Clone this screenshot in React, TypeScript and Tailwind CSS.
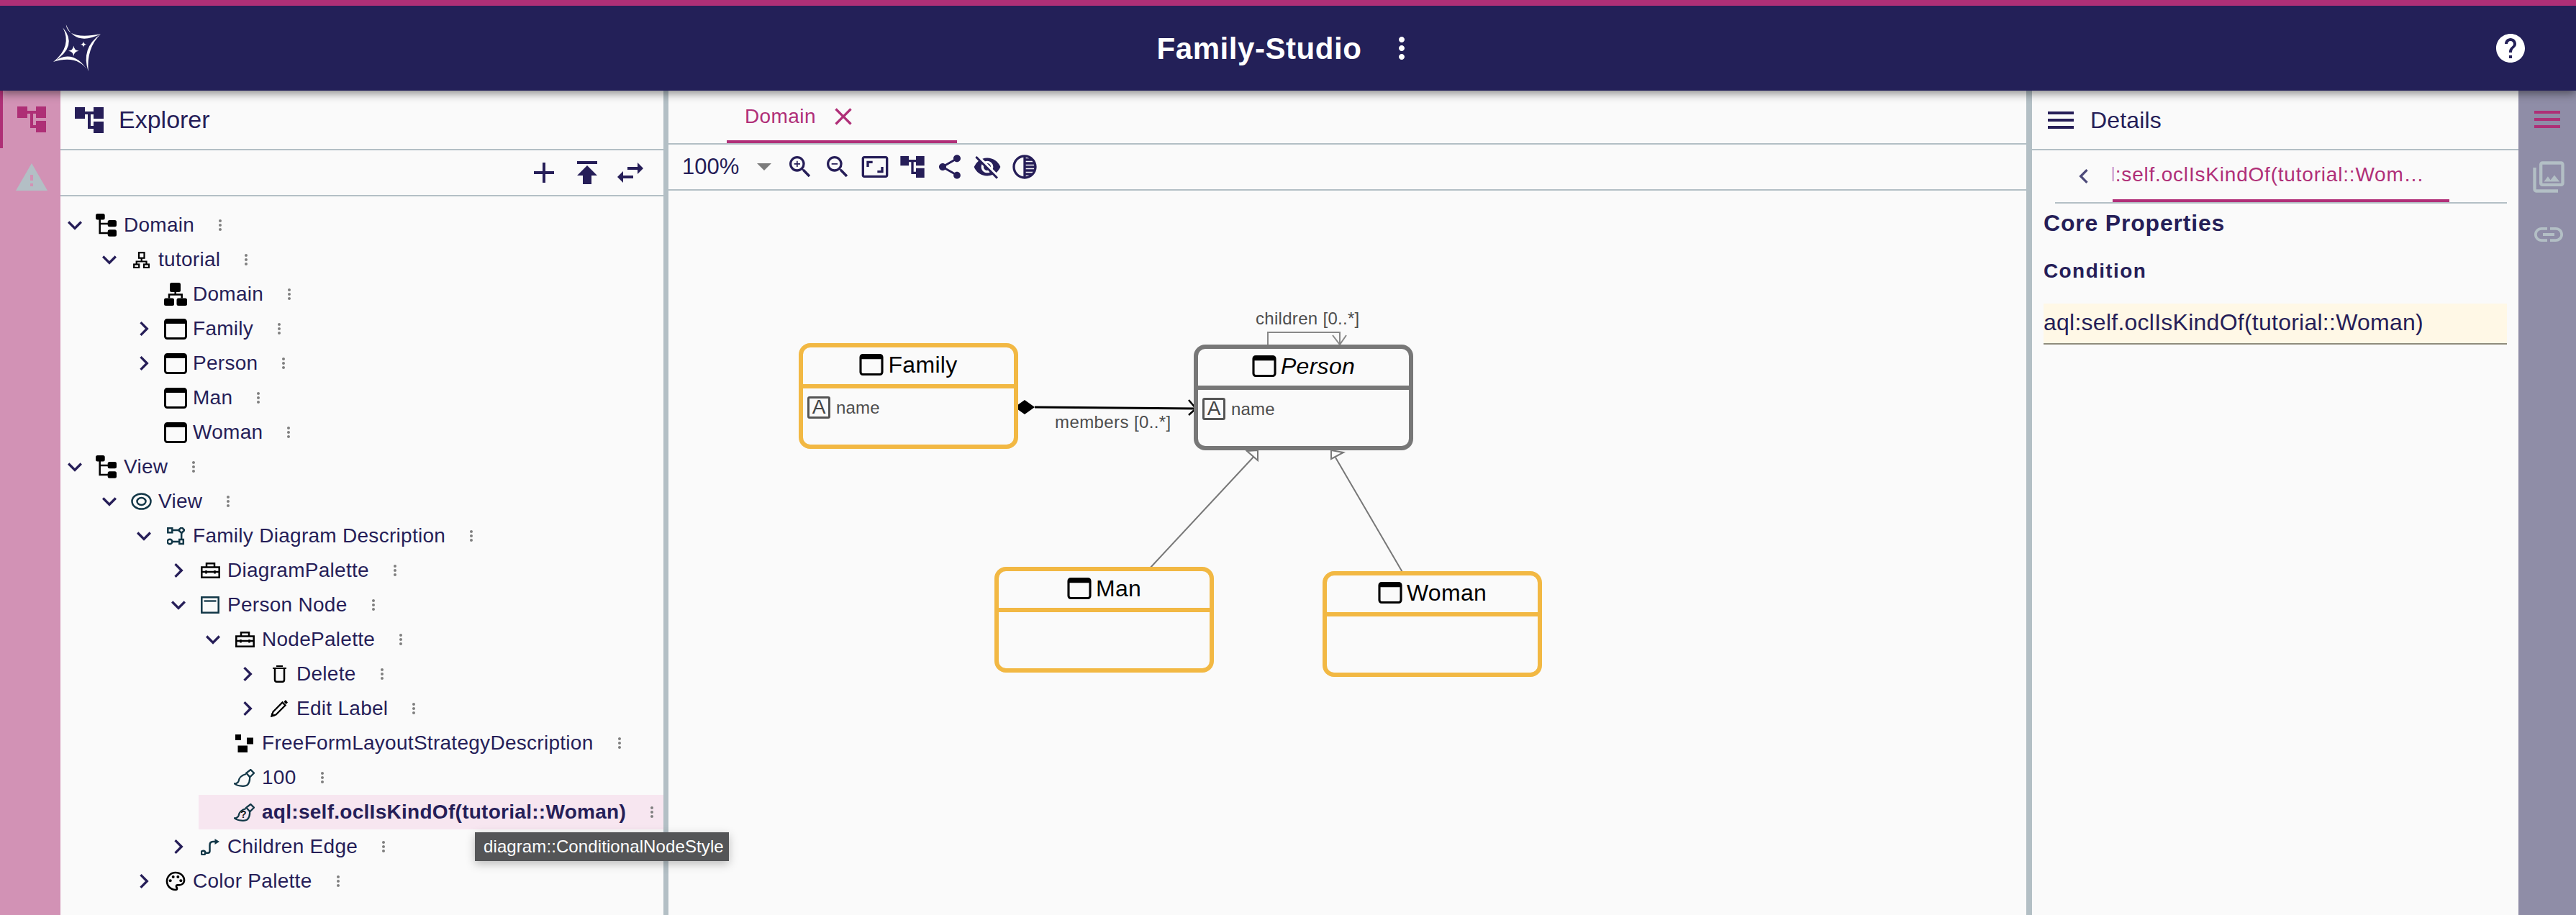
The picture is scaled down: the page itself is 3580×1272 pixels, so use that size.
import React from "react";
import {
  MdAccountTree, MdAdd, MdPublish, MdSwapHoriz, MdWarning, MdHelp, MdMoreVert, MdClose, MdZoomIn, MdZoomOut,
  MdAspectRatio, MdShare, MdVisibilityOff, MdTonality, MdMenu, MdOutlinePhotoLibrary, MdLink, MdKeyboardArrowDown,
  MdChevronRight, MdChevronLeft, MdOutlinePalette,
} from "react-icons/md";

const TEAL = "#123747";

function Logo() {
  return (
    <svg viewBox="0 0 68 68" className="w-[68px] h-[68px] ml-[73px]" fill="white">
      <path d="M18.700 1Q21.200 23 67 14.300Q31.200 31.800 18.700 1Z" />
      <path d="M67 14.300Q39 33.700 49.700 66.300Q47 33.700 67 14.300Z" />
      <path d="M49.700 66.300Q28.700 33 1 53Q35.300 42.400 49.700 66.300Z" />
      <path d="M14.300 5.300Q36.400 31.600 1 53Q27.800 31.600 14.300 5.300Z" />
      <path d="M29.300 30.400Q30 37 36.600 37.700Q30 38.400 29.300 45Q28.600 38.400 22 37.700Q28.600 37 29.300 30.400Z" />
      <path d="M43 24.400Q43.400 28.300 47.300 28.700Q43.400 29.100 43 33Q42.600 29.100 38.700 28.700Q42.600 28.300 43 24.400Z" />
    </svg>
  );
}

const TreeIcon = () => (
  <svg viewBox="0 0 29 32" className="w-[29px] h-[32px] mr-[10px]">
    <rect x="0" y="0" width="12.700" height="8.500" rx="2.500" />
    <rect x="16.700" y="9" width="12.300" height="9.300" rx="2.500" />
    <rect x="16.700" y="22.300" width="12.300" height="9.500" rx="2.500" />
    <path d="M5.700 8V27H17M5.700 14H17" stroke="black" strokeWidth="2.500" fill="none" />
  </svg>
);
const PackageSmall = () => (
  <svg viewBox="0 0 23 23" className="w-[23px] h-[23px] mr-[12px]" fill="none" stroke="black" strokeWidth="2.200">
    <rect x="8" y="1.200" width="7.500" height="7.500" />
    <rect x="1.200" y="17.500" width="7" height="4.500" />
    <rect x="15" y="17.500" width="7" height="4.500" />
    <path d="M11.700 9V14M4.700 17.500V13.500H18.500V17.500" />
  </svg>
);
const PackageFilled = () => (
  <svg viewBox="0 0 32 32" className="w-[32px] h-[32px] mr-[8px]">
    <rect x="8" y="0" width="15" height="13" rx="2.500" />
    <rect x="0" y="21.500" width="14" height="10.500" rx="2.500" />
    <rect x="17.500" y="21.500" width="14.500" height="10.500" rx="2.500" />
    <path d="M15.700 13V17M7 21.500V16.500H24.700V21.500" stroke="black" strokeWidth="2.500" fill="none" />
  </svg>
);
const WindowIcon = ({ className }: { className: string }) => (
  <svg viewBox="0 0 32 29" className={className}>
    <rect x="1.500" y="1.500" width="29" height="26" rx="3" fill="none" stroke="black" strokeWidth="3" />
    <rect x="1" y="1" width="30" height="6" rx="2" />
  </svg>
);
const ClassIcon = () => <WindowIcon className="w-[32px] h-[29px] mr-[8px]" />;
const EyeIcon = () => (
  <svg viewBox="0 0 29 24" className="w-[29px] h-[24px] mr-[9px]" fill="none" stroke={TEAL} strokeWidth="2.500">
    <ellipse cx="14.500" cy="12" rx="13" ry="10.500" />
    <ellipse cx="14.500" cy="12" rx="6" ry="5" />
  </svg>
);
const DiagramIcon = () => (
  <svg viewBox="0 0 25 25" className="w-[25px] h-[25px] mr-[11px]" fill="none" stroke={TEAL} strokeWidth="2.500">
    <rect x="1.300" y="1.300" width="6" height="6" />
    <path d="M20.300 0L24.500 4L20.300 8L16 4Z" />
    <circle cx="4" cy="20" r="3.300" />
    <rect x="17.300" y="17" width="5.500" height="6" />
    <path d="M7.500 4H16M20.200 8V17M7.500 20H17" />
  </svg>
);
const ToolboxIcon = ({ className }: { className: string }) => (
  <svg viewBox="0 0 27 22" className={className} fill="none" stroke="black" strokeWidth="2.500">
    <rect x="1.300" y="6.500" width="24.400" height="14.200" />
    <path d="M8 6.500V1.300H19V6.500" />
    <path d="M1 13H26" strokeWidth="2.500" />
    <path d="M7.500 11V15.500M19.500 11V15.500" strokeWidth="2.500" />
  </svg>
);
const NodeIcon = () => (
  <svg viewBox="0 0 26 24" className="w-[26px] h-[24px] mr-[11px]" fill="none" stroke={TEAL} strokeWidth="2.500">
    <rect x="1.300" y="1.300" width="23.400" height="21.400" />
    <path d="M4.500 6.500H21.500" strokeWidth="2.300" />
  </svg>
);
const TrashIcon = () => (
  <svg viewBox="0 0 19 24" className="w-[19px] h-[24px] mr-[14px]" fill="none" stroke="black" strokeWidth="2.500">
    <path d="M3 5V20C3 21.500 4 22.700 5.500 22.700H13.500C15 22.700 16 21.500 16 20V5" />
    <path d="M0 4H19" strokeWidth="2" />
    <path d="M5 1H14" strokeWidth="2" />
  </svg>
);
const PencilIcon = () => (
  <svg viewBox="0 0 24 24" className="w-[24px] h-[24px] mr-[12px]" fill="none" stroke="black" strokeWidth="2.300">
    <path d="M2 22L3.500 16.500L16.500 3.500L20.500 7.500L7.500 20.500Z" />
    <path d="M18.500 2.500L21 0L24 3.500L21.500 6Z" fill="black" stroke="none" />
    <path d="M0 24L1.500 18L6 22.500Z" fill="black" stroke="none" />
  </svg>
);
const LayoutIcon = () => (
  <svg viewBox="0 0 25 25" className="w-[25px] h-[25px] mr-[12px]">
    <rect x="0" y="0" width="8" height="8" />
    <rect x="16" y="4.500" width="9" height="9" />
    <rect x="3.500" y="15.500" width="13.500" height="9.500" />
  </svg>
);
const BrushIcon = ({ q }: { q?: boolean }) => (
  <svg viewBox="0 0 29 25" className="w-[29px] h-[25px] mr-[10px]" fill="none" stroke={TEAL} strokeWidth="2.300">
    <path d="M17 7C10 9 7 13 6.500 17C6 19 3 20.500 1 20.500C5 24 16 25 19 22C21.500 19 22.500 15 22 11" />
    <path d="M17.300 5.700L23.300 1L28 5.700L22.300 11.300Z" />
    {q && (
      <text x="9" y="20" fontSize="14" fontWeight="700" fill="#111111" stroke="none" fontFamily="Liberation Sans">
        ?
      </text>
    )}
  </svg>
);
const EdgeIcon = () => (
  <svg viewBox="0 0 26 24" className="w-[26px] h-[24px] mr-[11px]" fill="none" stroke={TEAL} strokeWidth="2.500">
    <circle cx="3.500" cy="20.500" r="2.800" />
    <path d="M6.700 20.700H10Q12.500 20.700 12.500 18V10Q12.500 5 17 5H20" />
    <path d="M19.500 1L26 5L19.500 9Z" fill={TEAL} stroke="none" />
  </svg>
);
const PaletteIcon = () => <MdOutlinePalette className="text-black text-[32px] mr-[8px]" />;
const ToolboxRow = () => <ToolboxIcon className="w-[27px] h-[22px] mr-[10px]" />;

type Item = { label: string; level: number; chevron?: "down" | "right"; icon: React.ReactNode; selected?: boolean };
const items: Item[] = [
  { label: "Domain", level: 0, chevron: "down", icon: <TreeIcon /> },
  { label: "tutorial", level: 1, chevron: "down", icon: <PackageSmall /> },
  { label: "Domain", level: 2, icon: <PackageFilled /> },
  { label: "Family", level: 2, chevron: "right", icon: <ClassIcon /> },
  { label: "Person", level: 2, chevron: "right", icon: <ClassIcon /> },
  { label: "Man", level: 2, icon: <ClassIcon /> },
  { label: "Woman", level: 2, icon: <ClassIcon /> },
  { label: "View", level: 0, chevron: "down", icon: <TreeIcon /> },
  { label: "View", level: 1, chevron: "down", icon: <EyeIcon /> },
  { label: "Family Diagram Description", level: 2, chevron: "down", icon: <DiagramIcon /> },
  { label: "DiagramPalette", level: 3, chevron: "right", icon: <ToolboxRow /> },
  { label: "Person Node", level: 3, chevron: "down", icon: <NodeIcon /> },
  { label: "NodePalette", level: 4, chevron: "down", icon: <ToolboxRow /> },
  { label: "Delete", level: 5, chevron: "right", icon: <TrashIcon /> },
  { label: "Edit Label", level: 5, chevron: "right", icon: <PencilIcon /> },
  { label: "FreeFormLayoutStrategyDescription", level: 4, icon: <LayoutIcon /> },
  { label: "100", level: 4, icon: <BrushIcon /> },
  { label: "aql:self.oclIsKindOf(tutorial::Woman)", level: 4, icon: <BrushIcon q />, selected: true },
  { label: "Children Edge", level: 3, chevron: "right", icon: <EdgeIcon /> },
  { label: "Color Palette", level: 2, chevron: "right", icon: <PaletteIcon /> },
];

function Row({ item }: { item: Item }) {
  return (
    <div className="flex h-[48px]" style={{ paddingLeft: item.level * 48 }}>
      <div className={`flex flex-1 items-center ${item.selected ? "bg-[#f7e6f0]" : ""}`}>
        <div className="w-[40px] h-[40px] flex items-center justify-center text-[#261e58] text-[40px]">
          {item.chevron === "down" && <MdKeyboardArrowDown />}
          {item.chevron === "right" && <MdChevronRight />}
        </div>
        <div className="w-[48px] flex items-center justify-end">{item.icon}</div>
        <span className={`text-[28px] leading-[48px] tracking-[0.280px] text-[#261e58] whitespace-nowrap ${item.selected ? "font-bold" : ""}`}>
          {item.label}
        </span>
        <MdMoreVert className="text-[24px] text-[#7f7f7f] ml-[24px]" />
      </div>
    </div>
  );
}

function Explorer() {
  return (
    <div className="w-[838px] flex flex-col">
      <div className="h-[81px] flex items-center pl-[16px]">
        <MdAccountTree className="text-[48px] text-[#261e58]" />
        <span className="text-[34px] text-[#261e58] ml-[17px]">Explorer</span>
      </div>
      <div className="h-[2px] bg-[#b3bfc5]" />
      <div className="h-[62px] flex items-center justify-end gap-[12px] pr-[22px] text-[48px] text-[#261e58]">
        <MdAdd />
        <MdPublish />
        <MdSwapHoriz />
      </div>
      <div className="h-[2px] bg-[#b3bfc5]" />
      <div className="pt-[16px]">
        {items.map((item, i) => (
          <Row key={i} item={item} />
        ))}
      </div>
    </div>
  );
}

type NodeProps = { left: number; top: number; name: string; gray?: boolean; italic?: boolean; attr?: boolean };
function DiagramNode({ left, top, name, gray, italic, attr }: NodeProps) {
  const edge = gray ? "border-[#777777]" : "border-[#f2b843]";
  return (
    <div className={`absolute w-[305px] h-[147px] border-[6px] rounded-[16px] flex flex-col ${edge}`} style={{ left, top }}>
      <div className={`h-[51px] flex items-center justify-center pb-[3px] text-[32px] tracking-[0.300px] text-black ${italic ? "italic" : ""}`}>
        <WindowIcon className="w-[34px] h-[30px] mr-[6px]" />
        <span>{name}</span>
      </div>
      <div className={`border-t-[6px] flex-1 ${edge}`}>
        {attr && (
          <div className="flex items-center pl-[6px] pt-[7px]">
            <span className="w-[32px] h-[31px] border-[3px] border-[#555555] rounded-[3px] flex items-center justify-center text-[28px] leading-none text-[#444444]">
              A
            </span>
            <span className="text-[24px] tracking-[0.200px] text-[#4d4d4d] ml-[8px] pt-[2px]">name</span>
          </div>
        )}
      </div>
    </div>
  );
}

function Diagram() {
  return (
    <div className="relative flex-1">
      <svg className="absolute left-0 top-0 w-[1887px] h-[1007px]" viewBox="929 265 1887 1007" fill="none">
        <path d="M1762 479V462H1862V479" stroke="#888888" strokeWidth="2" />
        <path d="M1852 466L1862 479L1871 466" stroke="#888888" strokeWidth="2" />
        <path d="M1438 566L1662 568" stroke="black" strokeWidth="3" />
        <path d="M1652 556L1662 568L1652 577" stroke="black" strokeWidth="2.500" />
        <path d="M1410 566L1424 556L1438 566L1424 576Z" fill="black" />
        <path d="M1597 791L1745 632" stroke="#777777" strokeWidth="2" />
        <path d="M1733 627L1748 626L1748 640Z" stroke="#777777" strokeWidth="2" fill="#fafafa" />
        <path d="M1950 797L1856 636" stroke="#777777" strokeWidth="2" />
        <path d="M1850 626L1867 629L1850 638Z" stroke="#777777" strokeWidth="2" fill="#fafafa" />
      </svg>
      <span className="absolute left-[816px] top-[164px] text-[24px] leading-[28px] tracking-[0.300px] text-[#4d4d4d] whitespace-nowrap">children [0..*]</span>
      <span className="absolute left-[537px] top-[308px] text-[24px] leading-[28px] tracking-[0.400px] text-[#4d4d4d] whitespace-nowrap">members [0..*]</span>
      <DiagramNode left={181} top={212} name="Family" attr />
      <DiagramNode left={730} top={214} name="Person" gray italic attr />
      <DiagramNode left={453} top={523} name="Man" />
      <DiagramNode left={909} top={529} name="Woman" />
    </div>
  );
}

function Center() {
  return (
    <div className="flex-1 flex flex-col">
      <div className="h-[73px] pl-[81px] flex items-end">
        <div className="w-[320px] h-[73px] border-b-[4px] border-[#b02f78] flex items-center pl-[25px] pt-[2px] text-[#b02f78]">
          <span className="text-[28px] tracking-[0.400px]">Domain</span>
          <MdClose className="text-[40px] ml-[18px]" />
        </div>
      </div>
      <div className="h-[2px] bg-[#b3bfc5]" />
      <div className="h-[62px] flex items-center pl-[19px] text-[#261e58]">
        <span className="text-[31px] w-[104px]">100%</span>
        <svg viewBox="0 0 20 10" className="w-[20px] h-[10px] mr-[20px]">
          <path d="M0 0H20L10 10Z" fill="#7c7c7c" />
        </svg>
        <div className="flex gap-[12px] text-[40px]">
          <MdZoomIn />
          <MdZoomOut />
          <MdAspectRatio />
          <MdAccountTree />
          <MdShare />
          <MdVisibilityOff />
          <MdTonality />
        </div>
      </div>
      <div className="h-[2px] bg-[#b3bfc5]" />
      <Diagram />
    </div>
  );
}

function Details() {
  return (
    <div className="w-[676px] flex flex-col">
      <div className="h-[81px] flex items-center pl-[16px]">
        <MdMenu className="text-[48px] text-[#261e58]" />
        <span className="text-[32px] tracking-[0.150px] text-[#261e58] ml-[17px]">Details</span>
      </div>
      <div className="h-[2px] bg-[#b3bfc5]" />
      <div className="h-[74px] ml-[32px] mr-[16px] border-b-[2px] border-[#b3bfc5] flex">
        <div className="w-[80px] flex items-center justify-center">
          <MdChevronLeft className="text-[40px] text-[#4d4a7a]" />
        </div>
        <div className="w-[468px] h-[72px] border-b-[4px] border-[#b02f78] overflow-hidden flex items-center">
          <span className="text-[28px] tracking-[0.800px] text-[#b02f78] whitespace-nowrap -ml-[36px]">
            aql:self.oclIsKindOf(tutorial::Wom…
          </span>
        </div>
      </div>
      <div className="px-[16px] text-[#261e58]">
        <div className="mt-[7px] text-[32px] leading-[40px] font-bold tracking-[0.800px]">Core Properties</div>
        <div className="mt-[31px] text-[28px] leading-[32px] font-bold tracking-[1.400px]">Condition</div>
        <div className="mt-[29px] h-[57px] bg-[#fff8e6] border-b-[2px] border-[#8f8c7c] flex items-center pb-[4px] text-[32px] tracking-[0.250px]">
          aql:self.oclIsKindOf(tutorial::Woman)
        </div>
      </div>
    </div>
  );
}

export default function App() {
  return (
    <div className="relative w-[3580px] h-[1272px] overflow-hidden bg-[#fafafa] flex flex-col font-['Liberation_Sans',sans-serif]">
      <header className="relative z-10 h-[126px] border-t-[8px] border-[#ae2f76] bg-[#232058] grid grid-cols-[1fr_auto_1fr] items-center text-white shadow-[0_4px_12px_rgba(0,0,0,0.45)]">
        <Logo />
        <div className="flex items-center">
          <span className="text-[42px] font-bold tracking-[0.550px]">Family-Studio</span>
          <MdMoreVert className="text-[48px] ml-[32px]" />
        </div>
        <div className="flex justify-end pr-[67px]">
          <MdHelp className="text-[48px]" />
        </div>
      </header>
      <div className="flex flex-1 min-h-0">
        <div className="w-[84px] bg-[#d292b5] flex flex-col">
          <div className="h-[80px] border-l-[4px] border-[#ae2f76] flex items-center pl-[16px]">
            <MdAccountTree className="text-[48px] text-[#ae2f76]" />
          </div>
          <div className="h-[82px] flex items-center pl-[20px]">
            <MdWarning className="text-[48px] text-[#b3bfc5]" />
          </div>
        </div>
        <Explorer />
        <div className="w-[7px] bg-[#b3bfc5]" />
        <Center />
        <div className="w-[8px] bg-[#b3bfc5]" />
        <Details />
        <div className="w-[80px] bg-[#8f8da7] flex flex-col items-start pl-[16px]">
          <div className="h-[80px] flex items-center">
            <MdMenu className="text-[48px] text-[#ae2f76]" />
          </div>
          <div className="h-[80px] flex items-center">
            <MdOutlinePhotoLibrary className="text-[52px] text-[#b3bfc5]" />
          </div>
          <div className="h-[80px] flex items-center pl-[2px]">
            <MdLink className="text-[48px] text-[#b3bfc5]" />
          </div>
        </div>
      </div>
      <div className="absolute left-[660px] top-[1157px] h-[40px] w-[353px] bg-[#545557] text-white text-[24px] tracking-[0.100px] flex items-center pl-[12px] whitespace-nowrap shadow-[0_4px_12px_rgba(0,0,0,0.25)]">
        diagram::ConditionalNodeStyle
      </div>
    </div>
  );
}
